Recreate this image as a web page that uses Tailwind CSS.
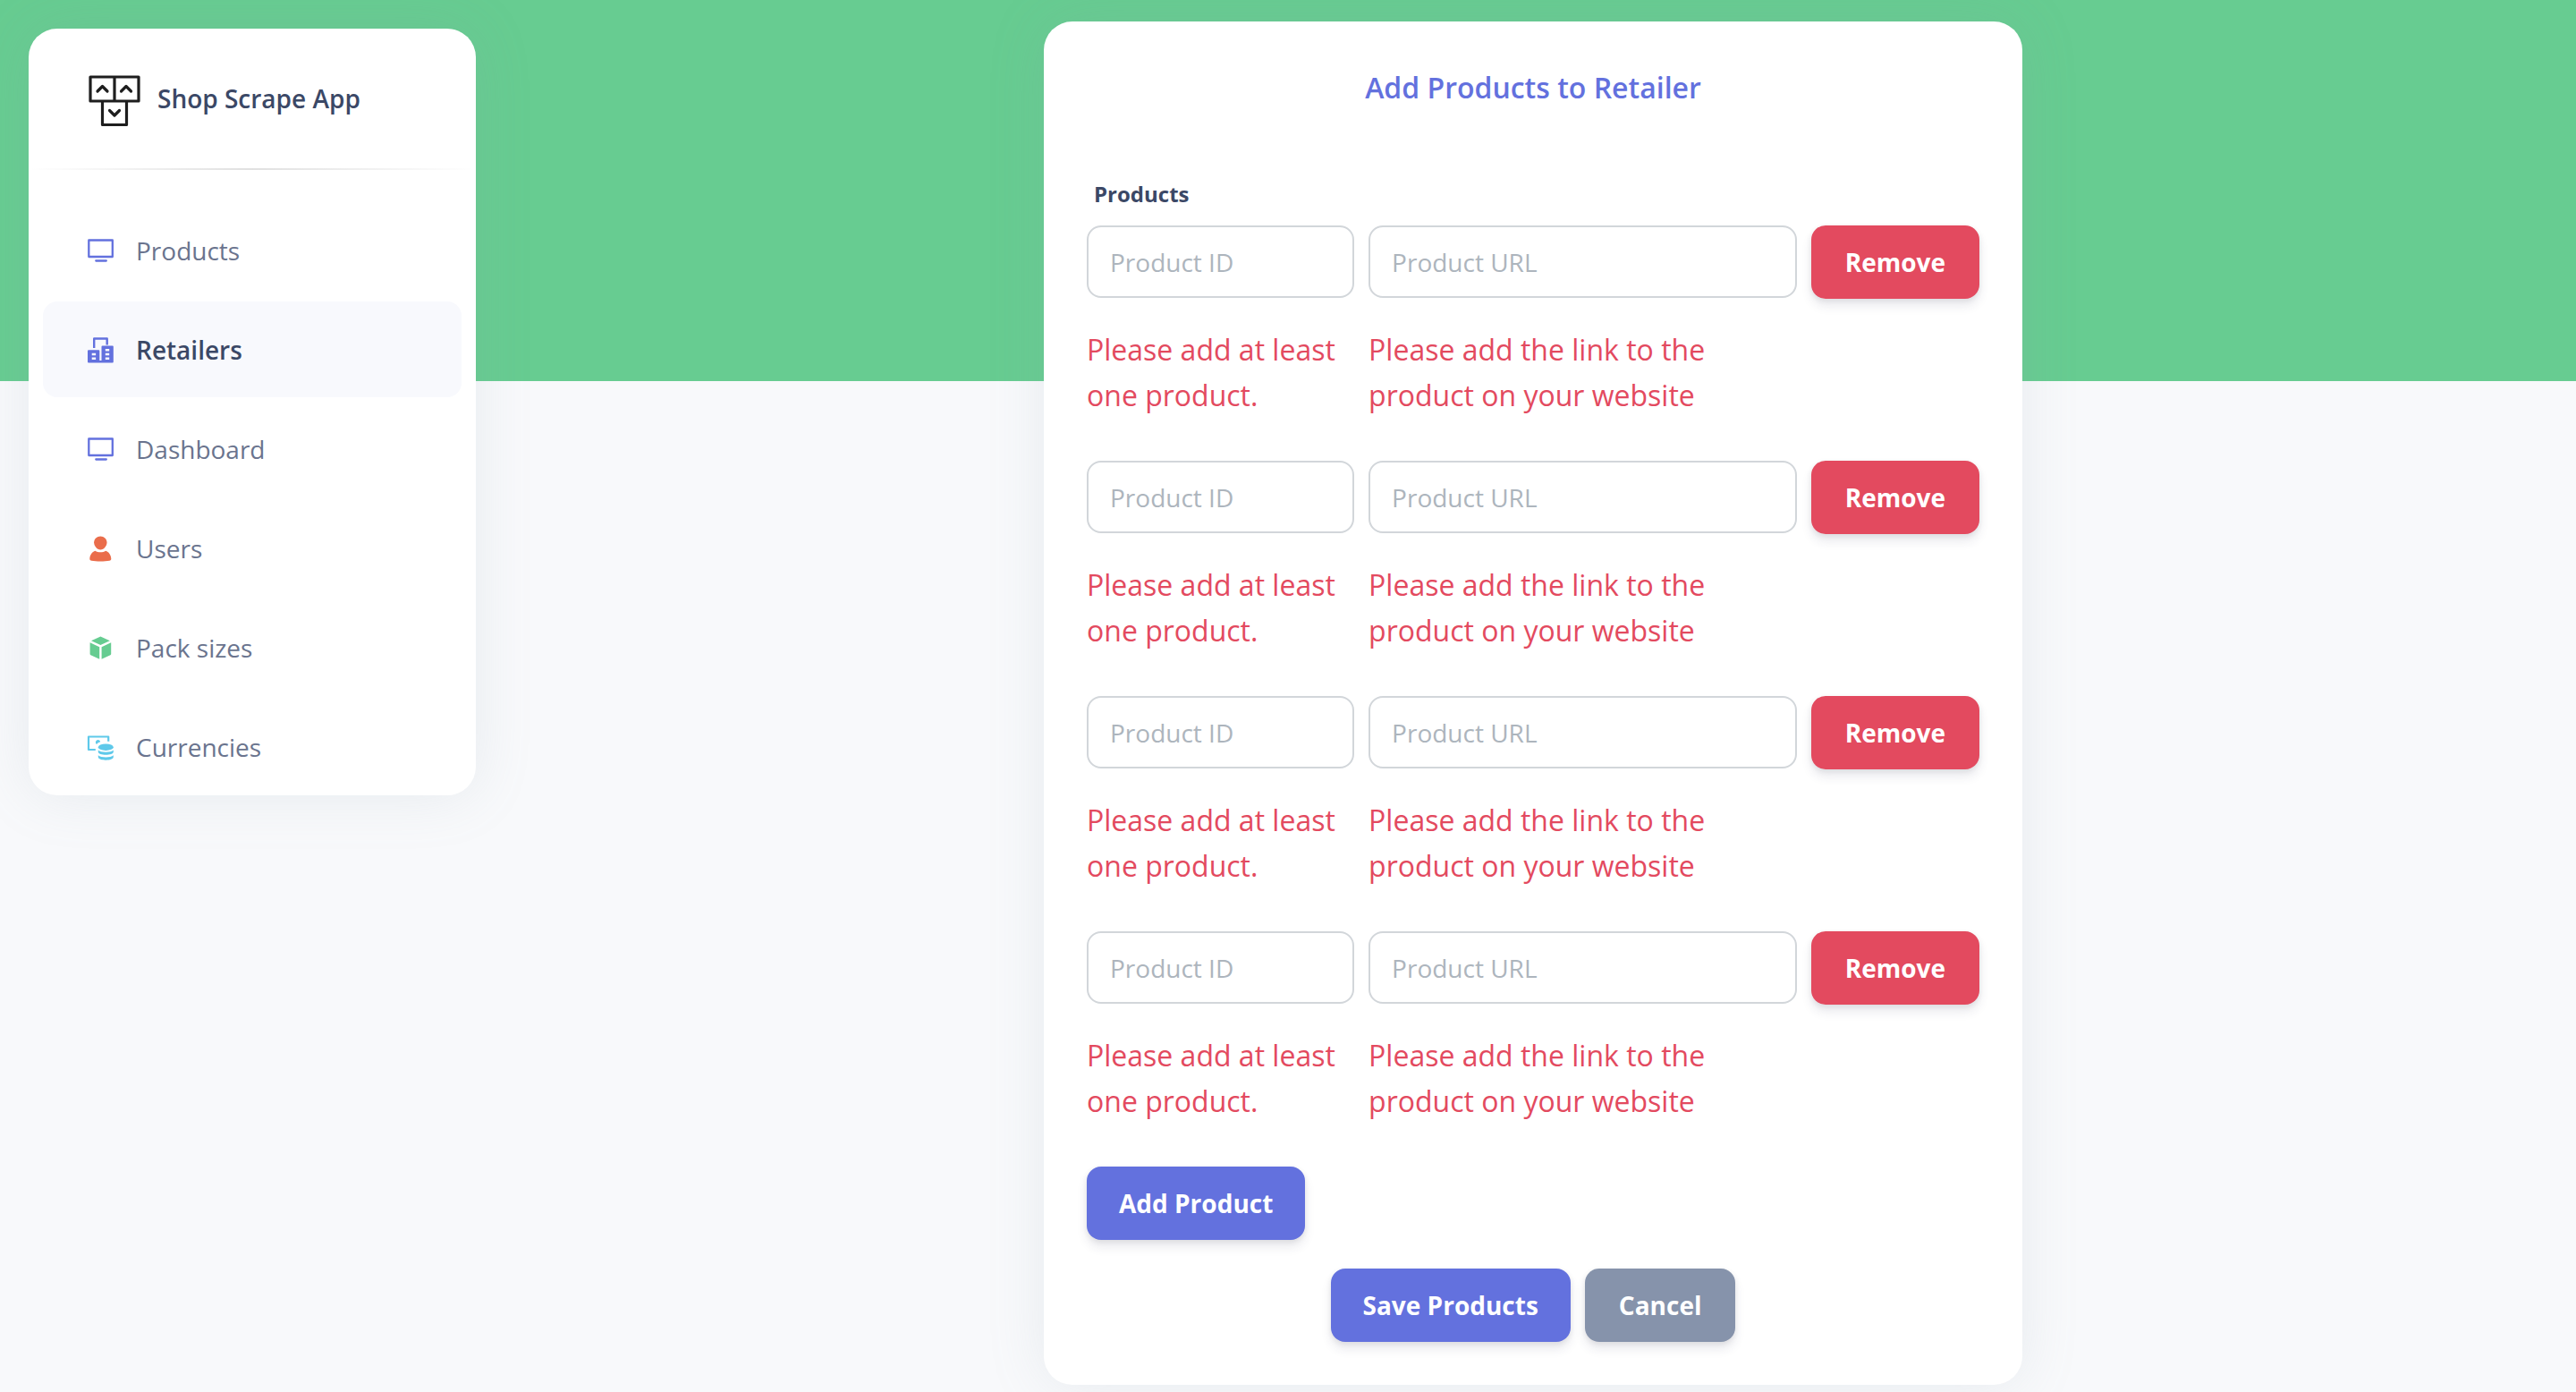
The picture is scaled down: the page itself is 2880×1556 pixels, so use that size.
<!DOCTYPE html>
<html lang="en">
<head>
<meta charset="utf-8">
<meta name="viewport" content="width=device-width, initial-scale=1">
<title>Shop Scrape App</title>
<script src="https://cdn.jsdelivr.net/npm/@tailwindcss/browser@4"></script>
</head>
<body class="relative min-h-screen bg-[#f8f9fb] font-['Open_Sans',sans-serif] text-[28px] text-[#3b4866]">
<div class="absolute inset-x-0 top-0 h-[426px] bg-[#67cc91]"></div>

<div class="relative flex items-start gap-4 pl-8">
  <aside class="mt-8 w-[500px] shrink-0 rounded-[32px] bg-white pb-px shadow-[0_0_64px_0_rgba(136,152,170,0.15)]">
    <a href="#" class="flex h-[156px] items-center gap-4 px-16 font-semibold whitespace-nowrap">
      <svg class="size-16 shrink-0" viewBox="0 0 64 64" fill="none" stroke="#1e1e1e" stroke-width="3.200" stroke-linejoin="round" stroke-linecap="round" aria-hidden="true">
        <path d="M5 8h54v27H5zM32 8v27M18.500 35v26.500h27V35"/>
        <path d="M13 24l5.500-5.500 5.500 5.500M39.500 24l5.500-5.500 5.500 5.500M26.500 45.500l5.500 5.500 5.500-5.500"/>
      </svg>
      Shop Scrape App
    </a>
    <hr class="h-0.5 border-0 bg-linear-to-r from-transparent via-black/12 to-transparent">
    <nav class="px-4 pt-9">
      <ul class="flex flex-col gap-1 text-[#6a748e]">
        <li><a href="#" class="flex h-[107px] items-center gap-2 rounded-2xl px-8">
          <span class="flex w-16 justify-center"><svg class="size-[30px]" viewBox="0 0 30 30" fill="none" stroke="#6371de" stroke-width="2.300" stroke-linejoin="round" stroke-linecap="round" aria-hidden="true"><path d="M2.300 3.500h26.500V22H2.300zM10.300 26.500h11.500"/></svg></span>
          Products</a></li>
        <li><a href="#" aria-current="page" class="flex h-[107px] items-center gap-2 rounded-2xl bg-[#f8f9fd] px-8 font-semibold text-[#3b4866]">
          <span class="flex w-16 justify-center"><svg class="size-[30px]" viewBox="0 0 30 30" fill="#6371de" aria-hidden="true"><path d="M8.200 13V2.500h14.500V9.500" fill="none" stroke="#6371de" stroke-width="2.400" stroke-linejoin="round"/><path fill-rule="evenodd" d="M2 15.300h11.300q1 0 1 1V27h2.200V11.500q0-1 1-1H28.800q1 0 1 1V28.500q0 1-1 1H2q-1 0-1-1V16.300q0-1 1-1zM5.700 18.700v2.600h4.400v-2.600zM5.700 23.500v2.600h4.400v-2.600zM20.800 13.900v2.600h4.400v-2.600zM20.800 18.700v2.600h4.400v-2.600zM20.800 23.500v2.600h4.400v-2.600z"/></svg></span>
          Retailers</a></li>
        <li><a href="#" class="flex h-[107px] items-center gap-2 rounded-2xl px-8">
          <span class="flex w-16 justify-center"><svg class="size-[30px]" viewBox="0 0 30 30" fill="none" stroke="#6371de" stroke-width="2.300" stroke-linejoin="round" stroke-linecap="round" aria-hidden="true"><path d="M2.300 3.500h26.500V22H2.300zM10.300 26.500h11.500"/></svg></span>
          Dashboard</a></li>
        <li><a href="#" class="flex h-[107px] items-center gap-2 rounded-2xl px-8">
          <span class="flex w-16 justify-center"><svg class="size-[30px]" viewBox="0 0 30 30" fill="#ea6d4b" aria-hidden="true"><path d="M15.300 1.500c4 0 7.200 3 7.200 6.800 0 4-3.200 8.200-7.200 8.200s-7.200-4.200-7.200-8.200c0-3.800 3.200-6.800 7.200-6.800z"/><path d="M9.500 17.800c3 2 8.600 2 11.600 0 3.500.8 6 4.700 6.200 8.700 0 1.500-.6 2-2 2.300-5 1-15 1-20 0-1.400-.3-2-.8-2-2.300.2-4 2.700-7.900 6.200-8.700z"/></svg></span>
          Users</a></li>
        <li><a href="#" class="flex h-[107px] items-center gap-2 rounded-2xl px-8">
          <span class="flex w-16 justify-center"><svg class="size-[30px]" viewBox="0 0 30 30" fill="#66cc91" aria-hidden="true"><path d="M15.400 2.500l10.400 4.700-10.400 4.700L5 7.200zM3.600 9.200l10.600 5v13.500L4.400 23.300q-.8-.4-.8-1.300zM27.200 9.200l-10.600 5v13.500l9.800-4.400q.8-.4.800-1.300z"/></svg></span>
          Pack sizes</a></li>
        <li><a href="#" class="flex h-[107px] items-center gap-2 rounded-2xl px-8">
          <span class="flex w-16 justify-center"><svg class="size-[30px]" viewBox="0 0 30 30" fill="#5fc9ea" aria-hidden="true"><path d="M9.800 18H2V3.500h22.200V8.800" fill="none" stroke="#5fc9ea" stroke-width="2.200" stroke-linejoin="round"/><path d="M11 12a2.700 2.700 0 1 1 4.200-2.800q-2.800.8-4.200 2.800z"/><ellipse cx="21.300" cy="15.200" rx="8.500" ry="3.700"/><path d="M12.800 18.500c3 3 14 3 17 0v2c0 4.300-17 4.300-17 0zM12.800 24.300c3 3 14 3 17 0v2c0 4.500-17 4.500-17 0z"/></svg></span>
          Currencies</a></li>
      </ul>
    </nav>
  </aside>

  <main class="min-w-0 flex-1 px-[72px] pt-6">
    <form class="mx-auto w-1/2 rounded-[32px] bg-white p-12 shadow-[0_0_64px_0_rgba(136,152,170,0.15)]">
      <h1 class="text-center text-[32px] leading-[51px] font-semibold text-[#6371de]">Add Products to Retailer</h1>
      <h2 class="mt-[75px] mb-4 ml-2 text-2xl leading-[38px] font-bold">Products</h2>

      <div class="mb-12 grid grid-cols-[30fr_48fr_auto] items-start gap-x-4 text-[32px] leading-[51px] text-[#e34a5f]">
        <div class="min-w-0">
          <input type="text" aria-label="Product ID" placeholder="Product ID" class="block h-[81px] w-full rounded-2xl border-2 border-[#d2d6da] bg-white px-6 text-[28px] text-[#3b4866] placeholder:text-[#adb5bd]">
          <p class="mt-8">Please add at least one product.</p>
        </div>
        <div class="min-w-0">
          <input type="url" aria-label="Product URL" placeholder="Product URL" class="block h-[81px] w-full rounded-2xl border-2 border-[#d2d6da] bg-white px-6 text-[28px] text-[#3b4866] placeholder:text-[#adb5bd]">
          <p class="mt-8">Please add the link to the product on your website</p>
        </div>
        <button type="button" class="h-[82px] rounded-2xl bg-[#e34a5f] px-[38px] text-[28px] font-bold text-white shadow-[0_8px_12px_rgba(50,50,93,0.1),0_2px_6px_rgba(0,0,0,0.08)]">Remove</button>
      </div>

      <div class="mb-12 grid grid-cols-[30fr_48fr_auto] items-start gap-x-4 text-[32px] leading-[51px] text-[#e34a5f]">
        <div class="min-w-0">
          <input type="text" aria-label="Product ID" placeholder="Product ID" class="block h-[81px] w-full rounded-2xl border-2 border-[#d2d6da] bg-white px-6 text-[28px] text-[#3b4866] placeholder:text-[#adb5bd]">
          <p class="mt-8">Please add at least one product.</p>
        </div>
        <div class="min-w-0">
          <input type="url" aria-label="Product URL" placeholder="Product URL" class="block h-[81px] w-full rounded-2xl border-2 border-[#d2d6da] bg-white px-6 text-[28px] text-[#3b4866] placeholder:text-[#adb5bd]">
          <p class="mt-8">Please add the link to the product on your website</p>
        </div>
        <button type="button" class="h-[82px] rounded-2xl bg-[#e34a5f] px-[38px] text-[28px] font-bold text-white shadow-[0_8px_12px_rgba(50,50,93,0.1),0_2px_6px_rgba(0,0,0,0.08)]">Remove</button>
      </div>

      <div class="mb-12 grid grid-cols-[30fr_48fr_auto] items-start gap-x-4 text-[32px] leading-[51px] text-[#e34a5f]">
        <div class="min-w-0">
          <input type="text" aria-label="Product ID" placeholder="Product ID" class="block h-[81px] w-full rounded-2xl border-2 border-[#d2d6da] bg-white px-6 text-[28px] text-[#3b4866] placeholder:text-[#adb5bd]">
          <p class="mt-8">Please add at least one product.</p>
        </div>
        <div class="min-w-0">
          <input type="url" aria-label="Product URL" placeholder="Product URL" class="block h-[81px] w-full rounded-2xl border-2 border-[#d2d6da] bg-white px-6 text-[28px] text-[#3b4866] placeholder:text-[#adb5bd]">
          <p class="mt-8">Please add the link to the product on your website</p>
        </div>
        <button type="button" class="h-[82px] rounded-2xl bg-[#e34a5f] px-[38px] text-[28px] font-bold text-white shadow-[0_8px_12px_rgba(50,50,93,0.1),0_2px_6px_rgba(0,0,0,0.08)]">Remove</button>
      </div>

      <div class="mb-12 grid grid-cols-[30fr_48fr_auto] items-start gap-x-4 text-[32px] leading-[51px] text-[#e34a5f]">
        <div class="min-w-0">
          <input type="text" aria-label="Product ID" placeholder="Product ID" class="block h-[81px] w-full rounded-2xl border-2 border-[#d2d6da] bg-white px-6 text-[28px] text-[#3b4866] placeholder:text-[#adb5bd]">
          <p class="mt-8">Please add at least one product.</p>
        </div>
        <div class="min-w-0">
          <input type="url" aria-label="Product URL" placeholder="Product URL" class="block h-[81px] w-full rounded-2xl border-2 border-[#d2d6da] bg-white px-6 text-[28px] text-[#3b4866] placeholder:text-[#adb5bd]">
          <p class="mt-8">Please add the link to the product on your website</p>
        </div>
        <button type="button" class="h-[82px] rounded-2xl bg-[#e34a5f] px-[38px] text-[28px] font-bold text-white shadow-[0_8px_12px_rgba(50,50,93,0.1),0_2px_6px_rgba(0,0,0,0.08)]">Remove</button>
      </div>

      <button type="button" class="block h-[82px] rounded-2xl bg-[#6371de] px-9 font-bold text-white shadow-[0_8px_12px_rgba(50,50,93,0.1),0_2px_6px_rgba(0,0,0,0.08)]">Add Product</button>
      <div class="mt-8 flex justify-center gap-4">
        <button type="submit" class="h-[82px] rounded-2xl bg-[#6371de] px-9 font-bold text-white shadow-[0_8px_12px_rgba(50,50,93,0.1),0_2px_6px_rgba(0,0,0,0.08)]">Save Products</button>
        <button type="button" class="h-[82px] rounded-2xl bg-[#8693ab] px-[38px] font-bold text-white shadow-[0_8px_12px_rgba(50,50,93,0.1),0_2px_6px_rgba(0,0,0,0.08)]">Cancel</button>
      </div>
    </form>
  </main>
</div>
</body>
</html>
